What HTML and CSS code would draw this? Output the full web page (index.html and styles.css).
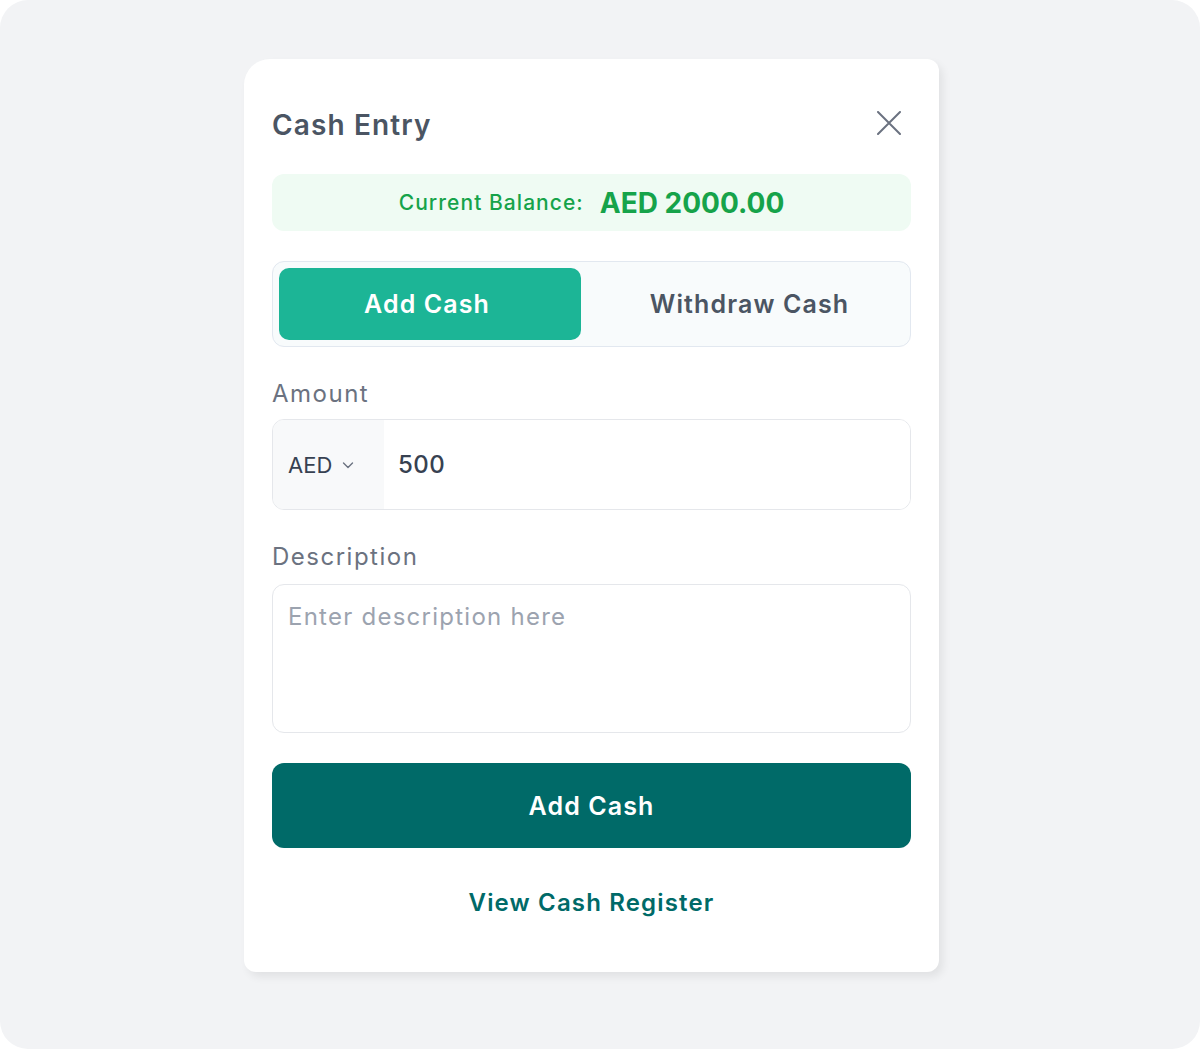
FILE: index.html
```html
<!DOCTYPE html>
<html lang="en">
<head>
    <meta charset="UTF-8">
    <meta name="viewport" content="width=device-width, initial-scale=1.0">
    <link rel="stylesheet" href="styles.css">
    <title>Cash Entry</title>
</head>
<body>
    <div class="pageBackdrop">
        <div class="cashModal">
            <div class="modalHeader">
                <h1 class="modalTitle">Cash Entry</h1>
                <button class="closeButton" aria-label="Close">
                    <svg width="24" height="24" viewBox="0 0 24 24" fill="none" stroke="currentColor" stroke-width="2" stroke-linecap="round">
                        <path d="M1 1 L23 23 M23 1 L1 23"/>
                    </svg>
                </button>
            </div>

            <div class="balanceBox">
                <span class="balanceLabel">Current Balance:</span>
                <span class="balanceValue">AED 2000.00</span>
            </div>

            <div class="toggleGroup">
                <button class="toggleButton active">Add Cash</button>
                <button class="toggleButton">Withdraw Cash</button>
            </div>

            <label class="fieldLabel">Amount</label>
            <div class="amountField">
                <div class="currencySelect">
                    <span>AED</span>
                    <svg width="14" height="14" viewBox="0 0 14 14" fill="none" stroke="currentColor" stroke-width="1.4" stroke-linecap="round" stroke-linejoin="round">
                        <path d="M2.5 5 L7 9.5 L11.5 5"/>
                    </svg>
                </div>
                <input class="amountInput" type="text" value="500">
            </div>

            <label class="fieldLabel">Description</label>
            <textarea class="descriptionField" placeholder="Enter description here"></textarea>

            <button class="submitButton">Add Cash</button>
            <a class="registerLink" href="#">View Cash Register</a>
        </div>
    </div>
</body>
</html>
```

FILE: styles.css
```css
* {
    box-sizing: border-box;
}

body {
    margin: 0;
    padding: 0;
    background-color: #ffffff;
    font-family: Inter, "Open Sans", Arial, sans-serif;
}

.pageBackdrop {
    width: 1200px;
    height: 1049px;
    background-color: #f2f3f5;
    border-radius: 28px;
    padding: 59px 0 0 244px;
}

.cashModal {
    width: 695px;
    height: 913px;
    background-color: #ffffff;
    border-radius: 26px 12px 12px 12px;
    box-shadow: 4px 5px 8px rgba(0, 0, 0, 0.07);
    padding: 44px 28px 0 28px;
    display: flex;
    flex-direction: column;
}

.modalHeader {
    height: 40px;
    display: flex;
    align-items: center;
    justify-content: space-between;
}

.modalTitle {
    margin: 0;
    margin-top: 3px;
    font-size: 28px;
    font-weight: 600;
    color: #4b5563;
    letter-spacing: 0.04em;
}

.closeButton {
    border: none;
    background: none;
    padding: 0;
    margin-right: 10px;
    color: #6b7280;
    display: flex;
}

.balanceBox {
    margin-top: 31px;
    height: 57px;
    background-color: #effbf3;
    border-radius: 12px;
    display: flex;
    align-items: center;
    justify-content: center;
    gap: 16px;
    color: #16a34a;
}

.balanceLabel {
    font-size: 21px;
    font-weight: 500;
    letter-spacing: 0.05em;
}

.balanceValue {
    font-size: 28px;
    font-weight: 700;
}

.toggleGroup {
    margin-top: 30px;
    height: 86px;
    border: 1px solid #e2e8f0;
    background-color: #f8fbfc;
    border-radius: 12px;
    padding: 6px;
    display: flex;
}

.toggleButton {
    flex: 1;
    border: none;
    background: none;
    border-radius: 10px;
    font-family: inherit;
    font-size: 25px;
    font-weight: 600;
    color: #4b5563;
    letter-spacing: 1.1px;
    padding-left: 20px;
}

.toggleButton.active {
    flex: none;
    width: 302px;
    padding-left: 0;
    background-color: #1cb596;
    color: #ffffff;
}

.fieldLabel {
    margin-top: 32px;
    line-height: 30px;
    font-size: 24px;
    color: #6b7280;
    letter-spacing: 1.5px;
}

.amountField {
    margin-top: 10px;
    height: 91px;
    border: 1px solid #e5e7eb;
    border-radius: 12px;
    display: flex;
    overflow: hidden;
}

.currencySelect {
    width: 111px;
    background-color: #f8f9fa;
    display: flex;
    align-items: center;
    gap: 9px;
    padding-left: 15px;
    font-size: 22px;
    color: #374151;
}

.currencySelect svg {
    color: #6b7280;
}

.amountInput {
    flex: 1;
    border: none;
    outline: none;
    padding: 0 0 0 14px;
    font-family: inherit;
    font-size: 24px;
    font-weight: 500;
    color: #374151;
    letter-spacing: 0.02em;
}

.fieldLabel + .descriptionField {
    margin-top: 12px;
}

.descriptionField {
    height: 149px;
    border: 1px solid #e5e7eb;
    border-radius: 12px;
    padding: 17px 15px;
    resize: none;
    outline: none;
    font-family: inherit;
    font-size: 24px;
    color: #374151;
    letter-spacing: 1.25px;
}

.descriptionField::placeholder {
    color: #9ca3af;
}

.submitButton {
    margin-top: 30px;
    height: 85px;
    border: none;
    border-radius: 12px;
    background-color: #006a68;
    color: #ffffff;
    font-family: inherit;
    font-size: 25px;
    font-weight: 600;
    letter-spacing: 1.1px;
}

.registerLink {
    margin-top: 40px;
    line-height: 30px;
    text-align: center;
    text-decoration: none;
    color: #006a68;
    font-size: 24px;
    font-weight: 600;
    letter-spacing: 1.15px;
}
```
